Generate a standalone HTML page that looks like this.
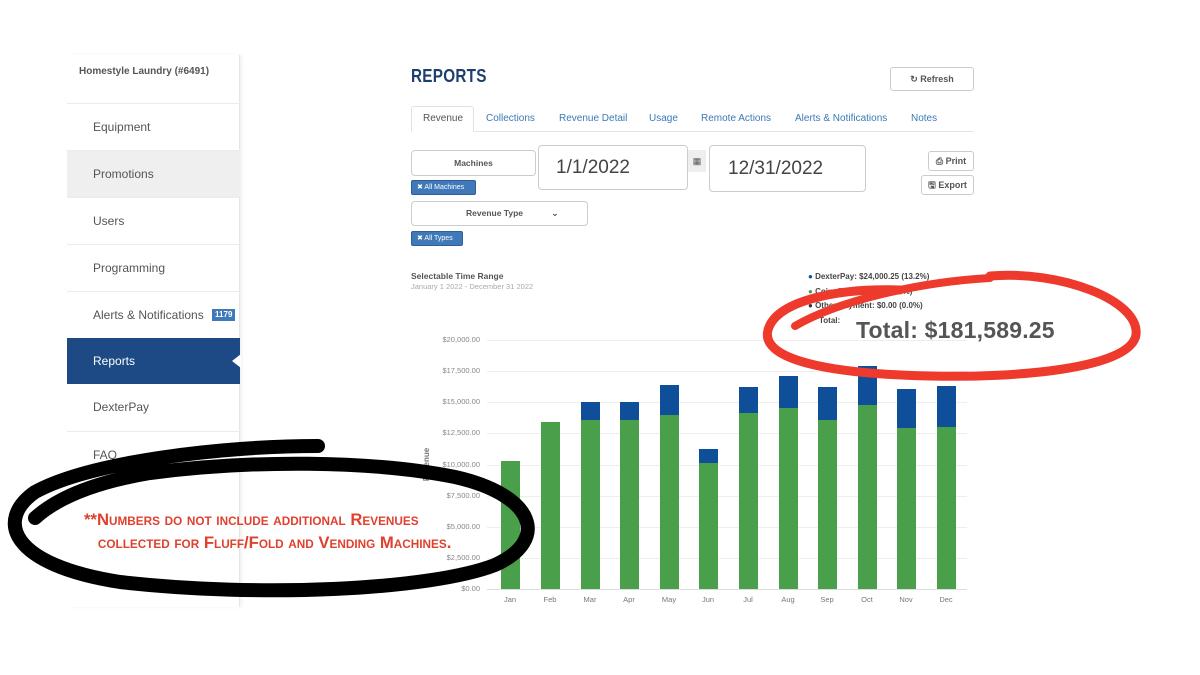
<!DOCTYPE html>
<html><head><meta charset="utf-8"><style>
*{margin:0;padding:0;box-sizing:border-box}
body{width:1200px;height:675px;background:#fff;position:relative;overflow:hidden;font-family:"Liberation Sans",sans-serif;color:#555}
.a{position:absolute}
.side{left:67px;top:55px;width:173px;height:552px;background:#fff;border-right:1px solid #e6e6e6;box-shadow:2px 0 3px rgba(0,0,0,.06)}
.item{position:absolute;left:67px;width:173px;height:47px;border-top:1px solid #ebebeb;font-size:12px;color:#555;padding-left:26px;line-height:46px}
.tab{position:absolute;top:109px;font-size:10px;color:#3a7ab5;line-height:20px}
.box{position:absolute;border:1px solid #ccc;border-radius:4px;background:#fff}
.chip{position:absolute;background:#3f79b9;color:#fff;font-size:7px;line-height:13px;padding-left:5px;border-radius:2px;border:1px solid #2f5f95}
.btn{position:absolute;border:1px solid #ccc;border-radius:3px;font-size:9px;font-weight:bold;color:#555;text-align:center}
.yl{position:absolute;left:420px;width:60px;text-align:right;font-size:7.5px;color:#888}
.gl{position:absolute;left:487px;width:480px;height:1px;background:#eee}
.xl{position:absolute;top:595px;font-size:7.5px;color:#777;width:40px;text-align:center}
.g{position:absolute;width:19px;background:#4aa04a}
.b{position:absolute;width:19px;background:#0f4f9a}
</style></head><body>
<div class="a side"></div>
<div class="a" style="left:79px;top:66px;font-size:10px;font-weight:bold;color:#555">Homestyle Laundry (#6491)</div>
<div class="item" style="top:103px">Equipment</div>
<div class="item" style="top:150px;background:#efefef">Promotions</div>
<div class="item" style="top:197px">Users</div>
<div class="item" style="top:244px">Programming</div>
<div class="item" style="top:291px">Alerts &amp; Notifications <span style="display:inline-block;background:#3f79b9;color:#fff;font-size:8px;font-weight:bold;line-height:12px;padding:0 3px;margin-left:5px;vertical-align:2px">1179</span></div>
<div class="item" style="top:338px;height:46px;background:#1d4a85;color:#fff;border:none">Reports</div>
<div class="a" style="left:232px;top:354px;width:0;height:0;border-top:7px solid transparent;border-bottom:7px solid transparent;border-right:9px solid #fff"></div>
<div class="item" style="top:384px;border:none">DexterPay</div>
<div class="item" style="top:431px">FAQ</div>

<div class="a" style="left:411px;top:66px;font-size:18px;font-weight:bold;color:#1d3f6e;letter-spacing:.3px;transform:scaleX(.85);transform-origin:left">REPORTS</div>
<div class="btn" style="left:890px;top:67px;width:84px;height:24px;line-height:22px">&#x21bb; Refresh</div>
<div class="a" style="left:411px;top:131px;width:563px;height:1px;background:#e5e5e5"></div>
<div class="a" style="left:411px;top:106px;width:63px;height:26px;border:1px solid #e2e2e2;border-bottom:1px solid #fff;border-radius:3px 3px 0 0;background:#fff"></div>
<div class="tab" style="left:423px;color:#555">Revenue</div>
<div class="tab" style="left:486px">Collections</div>
<div class="tab" style="left:559px">Revenue Detail</div>
<div class="tab" style="left:649px">Usage</div>
<div class="tab" style="left:701px">Remote Actions</div>
<div class="tab" style="left:795px">Alerts &amp; Notifications</div>
<div class="tab" style="left:911px">Notes</div>

<div class="box" style="left:411px;top:150px;width:125px;height:26px;font-size:8.5px;font-weight:bold;text-align:center;line-height:24px">Machines</div>
<div class="chip" style="left:411px;top:180px;width:65px">&#x2716; All Machines</div>
<div class="box" style="left:411px;top:201px;width:177px;height:25px;font-size:8.5px;font-weight:bold;line-height:23px;padding-left:54px">Revenue Type <span style="margin-left:26px">&#x2304;</span></div>
<div class="chip" style="left:411px;top:231px;width:52px">&#x2716; All Types</div>
<div class="box" style="left:538px;top:145px;width:150px;height:45px;font-size:19px;line-height:43px;padding-left:17px;color:#444">1/1/2022</div>
<div class="a" style="left:688px;top:150px;width:18px;height:22px;background:#eee;font-size:9px;text-align:center;line-height:22px">&#x25A6;</div>
<div class="box" style="left:709px;top:145px;width:157px;height:47px;font-size:19px;line-height:45px;padding-left:18px;color:#444">12/31/2022</div>
<div class="btn" style="left:928px;top:151px;width:46px;height:20px;line-height:18px">&#x2399; Print</div>
<div class="btn" style="left:921px;top:175px;width:53px;height:20px;line-height:18px">&#x1F5AB; Export</div>

<div class="a" style="left:411px;top:271px;font-size:8.5px;font-weight:bold;color:#555">Selectable Time Range</div>
<div class="a" style="left:411px;top:282px;font-size:7.5px;color:#aaa">January 1 2022 - December 31 2022</div>

<div class="a" style="left:808px;top:270px;font-size:8px;color:#444;line-height:14.5px;font-weight:bold">
<div><span style="color:#0f4f9a">&#x25CF;</span> DexterPay: $24,000.25 (13.2%)</div>
<div><span style="color:#4aa04a">&#x25CF;</span> Coin: $157,589.00 (86.8%)</div>
<div><span style="color:#333">&#x25CF;</span> Other Payment: $0.00 (0.0%)</div>
<div style="padding-left:11px">Total:</div>
</div>

<div class="gl" style="top:340px"></div><div class="gl" style="top:371px"></div><div class="gl" style="top:402px"></div><div class="gl" style="top:433px"></div><div class="gl" style="top:465px"></div><div class="gl" style="top:496px"></div><div class="gl" style="top:527px"></div><div class="gl" style="top:558px"></div><div class="gl" style="top:589px;background:#ddd"></div>
<div class="yl" style="top:335px">$20,000.00</div><div class="yl" style="top:366px">$17,500.00</div><div class="yl" style="top:397px">$15,000.00</div><div class="yl" style="top:428px">$12,500.00</div><div class="yl" style="top:460px">$10,000.00</div><div class="yl" style="top:491px">$7,500.00</div><div class="yl" style="top:522px">$5,000.00</div><div class="yl" style="top:553px">$2,500.00</div><div class="yl" style="top:584px">$0.00</div>
<div class="a" style="left:410px;top:460px;font-size:8px;font-weight:bold;color:#777;transform:rotate(-90deg)">Revenue</div>

<div class="g" style="left:501px;top:461px;height:128px"></div>
<div class="g" style="left:541px;top:422px;height:167px"></div>
<div class="g" style="left:581px;top:420px;height:169px"></div><div class="b" style="left:581px;top:402px;height:18px"></div>
<div class="g" style="left:620px;top:420px;height:169px"></div><div class="b" style="left:620px;top:402px;height:18px"></div>
<div class="g" style="left:660px;top:415px;height:174px"></div><div class="b" style="left:660px;top:385px;height:30px"></div>
<div class="g" style="left:699px;top:463px;height:126px"></div><div class="b" style="left:699px;top:449px;height:14px"></div>
<div class="g" style="left:739px;top:413px;height:176px"></div><div class="b" style="left:739px;top:387px;height:26px"></div>
<div class="g" style="left:779px;top:408px;height:181px"></div><div class="b" style="left:779px;top:376px;height:32px"></div>
<div class="g" style="left:818px;top:420px;height:169px"></div><div class="b" style="left:818px;top:387px;height:33px"></div>
<div class="g" style="left:858px;top:405px;height:184px"></div><div class="b" style="left:858px;top:366px;height:39px"></div>
<div class="g" style="left:897px;top:428px;height:161px"></div><div class="b" style="left:897px;top:389px;height:39px"></div>
<div class="g" style="left:937px;top:427px;height:162px"></div><div class="b" style="left:937px;top:386px;height:41px"></div>
<div class="xl" style="left:490px">Jan</div><div class="xl" style="left:530px">Feb</div><div class="xl" style="left:570px">Mar</div><div class="xl" style="left:609px">Apr</div><div class="xl" style="left:649px">May</div><div class="xl" style="left:688px">Jun</div><div class="xl" style="left:728px">Jul</div><div class="xl" style="left:768px">Aug</div><div class="xl" style="left:807px">Sep</div><div class="xl" style="left:847px">Oct</div><div class="xl" style="left:886px">Nov</div><div class="xl" style="left:926px">Dec</div>

<div class="a" style="left:856px;top:317px;font-size:23px;font-weight:bold;color:#555;letter-spacing:.2px">Total: $181,589.25</div>

<svg class="a" style="left:0;top:0" width="1200" height="675">
<path d="M990 276 C1060 270 1140 300 1136 335 C1130 370 1010 378 930 376 C830 374 760 360 768 330 C776 300 840 288 900 290" fill="none" stroke="#ee3a2d" stroke-width="9" stroke-linecap="round"/>
<path d="M795 326 C840 300 920 282 990 278" fill="none" stroke="#ee3a2d" stroke-width="8" stroke-linecap="round"/>
<path d="M318 446 C220 446 90 462 35 492 C-5 520 10 565 120 582 C260 598 430 590 495 565 C550 540 535 495 455 477 C370 460 250 460 150 473 C90 483 55 500 35 518" fill="none" stroke="#000" stroke-width="14" stroke-linecap="round"/>
</svg>
<div class="a" style="left:84px;top:508px;font-size:17px;font-weight:bold;color:#e0402e;font-variant:small-caps;transform:scaleX(.98);transform-origin:left;white-space:nowrap;line-height:23px;width:600px">**Numbers do not include additional Revenues<br>&nbsp;&nbsp;&nbsp;collected for Fluff/Fold and Vending Machines.</div>
</body></html>
